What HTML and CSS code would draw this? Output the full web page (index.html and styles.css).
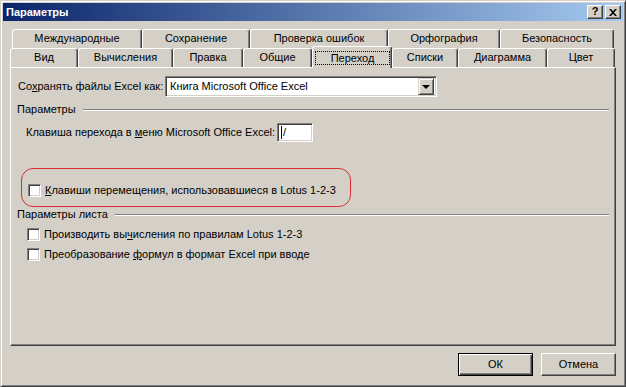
FILE: index.html
```html
<!DOCTYPE html>
<html lang="ru">
<head>
<meta charset="utf-8">
<title>Параметры</title>
<link rel="stylesheet" href="styles.css">
</head>
<body>
<div class="window">
  <div class="titlebar">
    <span class="title">Параметры</span>
    <div class="cap-btns">
      <span class="cbtn help">?</span>
      <span class="cbtn close"><svg width="8" height="7" viewBox="0 0 8 7"><path d="M0 0h2l2 2.3L6 0h2L5 3.5 8 7H6L4 4.7 2 7H0l3-3.5z" fill="#000"/></svg></span>
    </div>
  </div>
  <div class="client">
    <div class="tabs">
      <div class="tabrow back">
        <div class="tab w130">Международные</div>
        <div class="tab w108">Сохранение</div>
        <div class="tab w138">Проверка ошибок</div>
        <div class="tab w112">Орфография</div>
        <div class="tab w114">Безопасность</div>
      </div>
      <div class="tabrow front">
        <div class="tab w68">Вид</div>
        <div class="tab w95">Вычисления</div>
        <div class="tab w70">Правка</div>
        <div class="tab w69">Общие</div>
        <div class="tab w80 sel"><span class="focus">Переход</span></div>
        <div class="tab w66">Списки</div>
        <div class="tab w89">Диаграмма</div>
        <div class="tab w68">Цвет</div>
      </div>
    </div>
    <div class="panel">
      <div class="row-save">
        <span class="save-label">Со<u>х</u>ранять файлы Excel как:</span>
        <div class="combo">
          <span class="combo-text">Книга Microsoft Office Excel</span>
          <span class="combo-btn"><span class="arrow"></span></span>
        </div>
      </div>
      <div class="ghead g1"><span>Параметры</span><span class="etch"></span></div>
      <div class="row-key">
        <span class="key-label">Клавиша перехода в <u>м</u>еню Microsoft Office Excel:</span>
        <div class="edit"><span class="caret"></span>/</div>
      </div>
      <div class="redbox">
        <div class="check-row">
          <span class="check"></span>
          <span><u>К</u>лавиши перемещения, использовавшиеся в Lotus 1-2-3</span>
        </div>
      </div>
      <div class="ghead g2"><span>Параметры листа</span><span class="etch"></span></div>
      <div class="check-row list first">
        <span class="check"></span>
        <span>Производить вы<u>ч</u>исления по правилам Lotus 1-2-3</span>
      </div>
      <div class="check-row list">
        <span class="check"></span>
        <span>Преобразование <u>ф</u>ормул в формат Excel при вводе</span>
      </div>
    </div>
    <div class="btnrow">
      <div class="btn default">ОК</div>
      <div class="btn">Отмена</div>
    </div>
  </div>
</div>
</body>
</html>
```

FILE: styles.css
```css
* { box-sizing: border-box; }
body {
  margin: 0;
  font: 11px/13px "Liberation Sans", Arial, sans-serif;
  color: #000;
  background: #d4d0c8;
}
u { text-decoration: underline; text-underline-offset: 1px; }

.window {
  width: 626px;
  height: 387px;
  background: #d4d0c8;
  border: 1px solid;
  border-color: #d4d0c8 #404040 #404040 #d4d0c8;
  box-shadow: inset 1px 1px #fff, inset -1px -1px #808080;
  padding: 2px;
  display: flex;
  flex-direction: column;
}

.titlebar {
  height: 18px;
  flex: none;
  background: linear-gradient(to right, #0a246a, #a6caf0);
  display: flex;
  align-items: center;
  padding: 0 2px 0 3px;
  color: #fff;
  font-weight: bold;
}
.title { flex: 1; }
.cap-btns { display: flex; gap: 2px; }
.cbtn {
  width: 16px;
  height: 14px;
  background: #d4d0c8;
  border: 1px solid;
  border-color: #fff #404040 #404040 #fff;
  box-shadow: inset -1px -1px #808080;
  display: flex;
  align-items: center;
  justify-content: center;
  color: #000;
  font-size: 11px;
  line-height: 11px;
}
.cbtn.help { padding-bottom: 1px; }

.client {
  flex: 1;
  padding: 8px 7px 0 7px;
  display: flex;
  flex-direction: column;
}

.tabrow { display: flex; height: 19px; align-items: flex-start; }
.tabrow.back { padding-left: 2px; }
.tab {
  height: 19px;
  flex: none;
  border: 1px solid;
  border-bottom: none;
  border-color: #fff #404040 transparent #fff;
  border-radius: 3px 3px 0 0;
  box-shadow: inset -1px 0 #808080;
  text-align: center;
  line-height: 17px;
  white-space: nowrap;
  background: #d4d0c8;
}
.tab.sel {
  height: 22px;
  margin-top: -2px;
  position: relative;
  z-index: 1;
}
.focus {
  display: block;
  height: 14px;
  margin: 4px 1px 0 2px;
  border: 1px dotted #000;
  line-height: 12px;
}
.w66 { width: 66px; } .w68 { width: 68px; } .w69 { width: 69px; }
.w70 { width: 70px; } .w80 { width: 80px; } .w89 { width: 89px; }
.w95 { width: 95px; } .w108 { width: 108px; } .w112 { width: 112px; }
.w114 { width: 114px; } .w130 { width: 130px; } .w138 { width: 138px; }

.panel {
  height: 279px;
  flex: none;
  border: 1px solid;
  border-color: #fff #404040 #404040 #fff;
  box-shadow: inset -1px -1px #808080;
  padding: 8px 6px 0 7px;
}

.row-save { display: flex; align-items: center; height: 21px; }
.save-label { width: 147px; white-space: nowrap; }
.combo {
  width: 272px;
  height: 21px;
  border: 1px solid;
  border-color: #808080 #fff #fff #808080;
  box-shadow: inset 1px 1px #404040, inset -1px -1px #d4d0c8;
  background: #fff;
  display: flex;
  align-items: center;
  padding: 2px;
}
.combo-text { flex: 1; padding-left: 2px; white-space: nowrap; }
.combo-btn {
  width: 16px;
  height: 17px;
  background: #d4d0c8;
  border: 1px solid;
  border-color: #d4d0c8 #404040 #404040 #d4d0c8;
  box-shadow: inset 1px 1px #fff, inset -1px -1px #808080;
  display: flex;
  align-items: center;
  justify-content: center;
}
.arrow {
  width: 0;
  height: 0;
  border-left: 4px solid transparent;
  border-right: 4px solid transparent;
  border-top: 4px solid #000;
  margin-top: 1px;
}

.ghead { display: flex; align-items: center; height: 13px; margin-left: -1px; }
.ghead.g1 { margin-top: 6px; }
.ghead.g2 { margin-top: 1px; }
.etch {
  flex: 1;
  height: 2px;
  border-top: 1px solid #808080;
  border-bottom: 1px solid #fff;
  margin-left: 7px;
}

.row-key { display: flex; align-items: center; margin-top: 7px; padding-left: 8px; height: 19px; }
.key-label { width: 251px; white-space: nowrap; }
.edit {
  width: 36px;
  height: 19px;
  border: 1px solid;
  border-color: #808080 #fff #fff #808080;
  box-shadow: inset 1px 1px #404040, inset -1px -1px #d4d0c8;
  background: #fff;
  display: flex;
  align-items: center;
  padding-left: 3px;
}
.caret { width: 1px; height: 13px; background: #000; margin-right: 1px; }

.redbox {
  margin-top: 26px;
  margin-left: 3px;
  width: 330px;
  height: 39px;
  border: 1px solid #dc2f35;
  border-radius: 12px;
  padding: 15px 0 0 6px;
}

.check-row { display: flex; align-items: center; height: 13px; gap: 4px; white-space: nowrap; }
.check-row.list { padding-left: 9px; margin-top: 7px; }
.check {
  width: 13px;
  height: 13px;
  flex: none;
  background: #fff;
  border: 1px solid;
  border-color: #808080 #fff #fff #808080;
  box-shadow: inset 1px 1px #404040, inset -1px -1px #d4d0c8;
}

.btnrow { display: flex; justify-content: flex-end; gap: 8px; margin-top: 7px; }
.btn {
  width: 75px;
  height: 23px;
  border: 1px solid;
  border-color: #fff #404040 #404040 #fff;
  box-shadow: inset -1px -1px #808080;
  display: flex;
  align-items: center;
  justify-content: center;
}
.btn.default {
  border: 1px solid #000;
  box-shadow: inset 1px 1px #fff, inset -1px -1px #404040, inset -2px -2px #808080;
}
```
